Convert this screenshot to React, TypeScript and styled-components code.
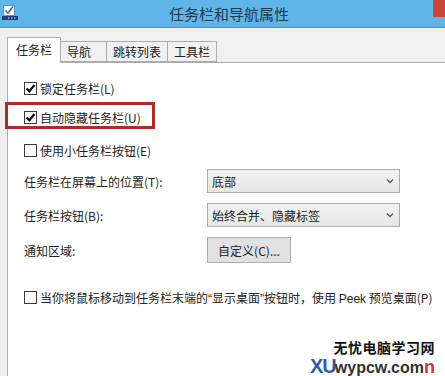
import styled, { createGlobalStyle } from 'styled-components';

const GlobalStyle = createGlobalStyle`
  html, body {
    margin: 0;
    padding: 0;
    background: #f0f0f0;
  }
  body {
    font-family: "Noto Sans CJK SC", "Liberation Sans", sans-serif;
  }
`;

const Check = ({ checked }: { checked?: boolean }) => (
  <Box>
    {checked && (
      <svg width="11" height="11" viewBox="0 0 11 11">
        <path d="M1.5 5.5 L4.3 8.3 L9.5 2" fill="none" stroke="#111" strokeWidth="2.2" />
      </svg>
    )}
  </Box>
);

const Chevron = () => (
  <svg width="8" height="6" viewBox="0 0 8 6">
    <path d="M1 1.5 L4 4.5 L7 1.5" fill="none" stroke="#555" strokeWidth="1.3" />
  </svg>
);

const AppIcon = () => (
  <svg width="16" height="16" viewBox="0 0 16 16">
    <rect x="1.5" y="1.5" width="11" height="10" fill="#fff" stroke="#7a8a99" />
    <path d="M3.5 6.5 L6 9 L11 2.5" fill="none" stroke="#2f6fb3" strokeWidth="1.6" />
    <rect x="0" y="12" width="16" height="4" fill="#1f3f7a" />
    <rect x="6" y="13.5" width="1.5" height="1" fill="#cfe0f5" />
    <rect x="9" y="13.5" width="1.5" height="1" fill="#cfe0f5" />
    <rect x="12" y="13.5" width="1.5" height="1" fill="#cfe0f5" />
  </svg>
);

const tabs = ['任务栏', '导航', '跳转列表', '工具栏'];

const App = () => {
  return (
    <Window>
      <GlobalStyle />
      <TitleBar>
        <IconSlot>
          <AppIcon />
        </IconSlot>
        <Title>任务栏和导航属性</Title>
        <Close />
      </TitleBar>

      <Body>
        <TabStrip>
          {tabs.map((t, i) => (
            <Tab key={t} $active={i === 0} $wide={t === '导航'}>
              {t}
            </Tab>
          ))}
        </TabStrip>

        <Panel>
          <CheckRow $top={15}>
            <Check checked />
            <span>锁定任务栏(L)</span>
          </CheckRow>
          <CheckRow $top={9}>
            <Check checked />
            <span>自动隐藏任务栏(U)</span>
          </CheckRow>
          <CheckRow $top={13}>
            <Check />
            <span>使用小任务栏按钮(E)</span>
          </CheckRow>

          <Form>
            <Label>任务栏在屏幕上的位置(T):</Label>
            <Select>
              <span>底部</span>
              <Chevron />
            </Select>
            <Label>任务栏按钮(B):</Label>
            <Select>
              <span>始终合并、隐藏标签</span>
              <Chevron />
            </Select>
            <Label>通知区域:</Label>
            <Button>自定义(C)...</Button>
          </Form>

          <CheckRow $top={24}>
            <Check />
            <span>
              当你将鼠标移动到任务栏末端的<Quote>“</Quote>显示桌面<Quote>”</Quote>按钮时，使用 <Latin>Peek</Latin> 预览桌面(P)
            </span>
          </CheckRow>

          <Highlight />
        </Panel>
      </Body>

      <Watermark>
        <SiteName>无忧电脑学习网</SiteName>
        <SiteUrl>
          <Blue>XU</Blue>
          <Dark>wypcw.com</Dark>
          <Red>n</Red>
        </SiteUrl>
      </Watermark>
    </Window>
  );
};
export default App;

const Window = styled.div`
  position: relative;
  width: 445px;
  height: 376px;
  overflow: hidden;
  display: flex;
  flex-direction: column;
  background: #f0f0f0;
  color: #222;
  font-size: 12px;
`;

const TitleBar = styled.div`
  display: flex;
  align-items: flex-start;
  height: 27px;
  flex-shrink: 0;
  background: #60b5e8;
  border-bottom: 1px solid #4a97c9;
`;

const IconSlot = styled.div`
  width: 20px;
  padding: 4px 0 0 2px;
  box-sizing: border-box;
  display: flex;
`;

const Title = styled.div`
  flex: 1;
  text-align: center;
  padding-left: 5px;
  line-height: 27px;
  font-size: 15px;
  color: #22394b;
`;

const Close = styled.div`
  width: 12px;
  height: 17px;
  background: #c8453d;
`;

const Body = styled.div`
  flex: 1;
  display: flex;
  flex-direction: column;
  padding: 9px 0 0 7px;
`;

const TabStrip = styled.div`
  display: flex;
  align-items: flex-end;
  height: 25px;
  position: relative;
  z-index: 1;
`;

const Tab = styled.div<{ $active?: boolean; $wide?: boolean }>`
  box-sizing: border-box;
  height: ${({ $active }) => ($active ? '26px' : '21px')};
  margin-bottom: ${({ $active }) => ($active ? '-1px' : '0')};
  min-width: ${({ $wide }) => ($wide ? '46px' : '0')};
  padding: ${({ $active }) => ($active ? '0 8px 3px' : '0 6px')};
  display: flex;
  align-items: center;
  background: ${({ $active }) => ($active ? '#fff' : '#f0f0f0')};
  border: 1px solid #acacac;
  border-bottom: ${({ $active }) => ($active ? 'none' : '1px solid #acacac')};
  & + & {
    border-left: none;
  }
  font-size: 12px;
  color: #222;
`;

const Panel = styled.div`
  position: relative;
  flex: 1;
  background: #fff;
  border-left: 1px solid #acacac;
  border-top: 1px solid #acacac;
  padding-left: 16px;
`;

const CheckRow = styled.div<{ $top: number }>`
  display: flex;
  align-items: center;
  gap: 3px;
  height: 20px;
  margin-top: ${({ $top }) => $top}px;
  white-space: nowrap;
`;

const Quote = styled.span`
  font-family: "Liberation Sans", sans-serif;
`;

const Latin = styled.span`
  font-family: "Liberation Sans", sans-serif;
`;

const Box = styled.div`
  width: 13px;
  height: 13px;
  box-sizing: border-box;
  border: 1px solid #3a3a3a;
  background: #fff;
  display: flex;
  align-items: center;
  justify-content: center;
  flex-shrink: 0;
`;

const Form = styled.div`
  display: grid;
  grid-template-columns: 183px 193px;
  grid-auto-rows: auto;
  row-gap: 10px;
  align-items: center;
  margin-top: 9px;
`;

const Label = styled.div`
  white-space: nowrap;
`;

const Select = styled.div`
  box-sizing: border-box;
  height: 24px;
  display: flex;
  align-items: center;
  justify-content: space-between;
  padding: 0 5px 0 4px;
  background: linear-gradient(#f2f2f2, #e6e6e6);
  border: 1px solid #acacac;
`;

const Button = styled.div`
  box-sizing: border-box;
  width: 84px;
  height: 26px;
  display: flex;
  align-items: center;
  justify-content: center;
  background: #e1e1e1;
  border: 1px solid #adadad;
`;

const Highlight = styled.div`
  position: absolute;
  left: -3px;
  top: 39px;
  width: 150px;
  height: 27px;
  box-sizing: border-box;
  border: 3px solid #b3282b;
  pointer-events: none;
`;

const Watermark = styled.div`
  position: absolute;
  right: 10px;
  top: 338px;
  display: flex;
  flex-direction: column;
  align-items: flex-end;
`;

const SiteName = styled.div`
  font-size: 14px;
  font-weight: bold;
  letter-spacing: 0.5px;
  color: #111;
  line-height: 18px;
`;

const SiteUrl = styled.div`
  display: flex;
  align-items: baseline;
  font-family: "Liberation Sans", sans-serif;
  font-weight: bold;
  line-height: 20px;
`;

const Blue = styled.span`
  font-size: 20px;
  color: #2e5ea6;
  letter-spacing: -1px;
  margin-right: -1px;
`;

const Dark = styled.span`
  font-size: 16px;
  color: #333;
`;

const Red = styled.span`
  font-size: 18px;
  color: #c8373a;
`;
